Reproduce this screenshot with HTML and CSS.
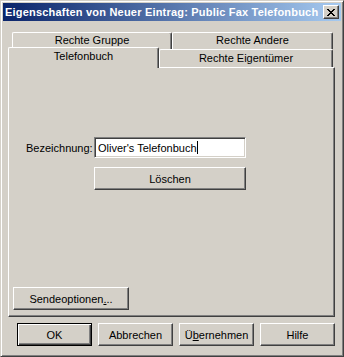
FILE: index.html
```html
<!DOCTYPE html>
<html lang="de">
<head>
    <meta charset="UTF-8">
    <meta name="viewport" content="width=device-width, initial-scale=1.0">
    <title>Eigenschaften von Neuer Eintrag</title>
    <link rel="stylesheet" href="styles.css">
</head>
<body>

    <div class="window">
        <div class="titlebar">
            <span class="title">Eigenschaften von Neuer Eintrag: Public Fax Telefonbuch</span>
            <span class="close">
                <svg width="8" height="7" viewBox="0 0 8 7">
                    <path d="M0 0h2v1h1v1h2v-1h1v-1h2v1h-1v1h-1v1h-1v1h1v1h1v1h1v1h-2v-1h-1v-1h-2v1h-1v1h-2v-1h1v-1h1v-1h1v-1h-1v-1h-1v-1h-1z" fill="#000"/>
                </svg>
            </span>
        </div>

        <div class="tabs">
            <div class="tab-row back">
                <div class="tab first">Rechte Gruppe</div>
                <div class="tab second">Rechte Andere</div>
            </div>
            <div class="tab-row front">
                <div class="tab active">Telefonbuch</div>
                <div class="tab owner">Rechte Eigentümer</div>
            </div>
            <div class="panel">
                <div class="form">
                    <label class="field-label">Bezeichnung:</label>
                    <div class="edit">Oliver's Telefonbuch<span class="caret"></span></div>
                    <span></span>
                    <button class="btn wide">Löschen</button>
                </div>
                <button class="btn send">Sendeoptionen<u>.</u>..</button>
            </div>
        </div>

        <div class="buttons">
            <button class="btn default">OK</button>
            <button class="btn">Abbrechen</button>
            <button class="btn">Ü<u>b</u>ernehmen</button>
            <button class="btn">Hilfe</button>
        </div>
    </div>

</body>
</html>
```

FILE: styles.css
```css
body {
    margin: 0;
    font-family: "Liberation Sans", Arial, sans-serif;
    font-size: 11px;
    color: #000;
}
.window {
    box-sizing: border-box;
    width: 344px;
    height: 357px;
    padding: 2px;
    background: #d4d0c8;
    border: 1px solid;
    border-color: #d4d0c8 #404040 #404040 #d4d0c8;
    box-shadow: inset 1px 1px #fff, inset -1px -1px #808080;
}
.titlebar {
    height: 18px;
    display: flex;
    align-items: center;
    justify-content: space-between;
    padding: 0 2px;
    background: linear-gradient(to right, #0a246a, #a6caf0);
}
.title {
    color: #fff;
    font-weight: bold;
    letter-spacing: 0.2px;
    white-space: nowrap;
}
.close {
    box-sizing: border-box;
    width: 16px;
    height: 14px;
    display: flex;
    align-items: center;
    justify-content: center;
    background: #d4d0c8;
    border: 1px solid;
    border-color: #fff #404040 #404040 #fff;
    box-shadow: inset -1px -1px #808080;
}
.tabs {
    margin: 11px 6px 0 5px;
}
.tab-row {
    display: flex;
    align-items: flex-start;
}
.tab-row.back {
    height: 17px;
    padding-left: 4px;
}
.tab-row.front {
    height: 18px;
}
.tab {
    box-sizing: border-box;
    height: 100%;
    border-top: 1px solid #fff;
    border-left: 1px solid #fff;
    border-right: 1px solid #404040;
    border-radius: 2px 2px 0 0;
    box-shadow: inset -1px 0 #808080;
    text-align: center;
    line-height: 15px;
    white-space: nowrap;
}
.tab.first {
    width: 160px;
}
.tab.second {
    width: 161px;
}
.tab.active {
    position: relative;
    z-index: 1;
    width: 151px;
    height: 21px;
    margin-top: -2px;
    background: #d4d0c8;
    line-height: 17px;
}
.tab.owner {
    width: 174px;
    line-height: 16px;
}
.panel {
    box-sizing: border-box;
    height: 250px;
    display: flex;
    flex-direction: column;
    align-items: flex-start;
    padding: 69px 0 6px 4px;
    border: 1px solid;
    border-color: #fff #404040 #404040 #fff;
    box-shadow: inset -1px -1px #808080;
}
.form {
    display: grid;
    grid-template-columns: 68px 152px;
    row-gap: 9px;
    align-items: center;
    margin-left: 13px;
}
.edit {
    box-sizing: border-box;
    height: 21px;
    padding: 0 3px;
    display: flex;
    align-items: center;
    background: #fff;
    border: 1px solid;
    border-color: #808080 #fff #fff #808080;
    box-shadow: inset 1px 1px #404040, inset -1px -1px #d4d0c8;
    white-space: nowrap;
}
.caret {
    display: inline-block;
    width: 1px;
    height: 13px;
    background: #000;
}
.btn {
    box-sizing: border-box;
    height: 23px;
    padding: 0;
    font-family: inherit;
    font-size: 11px;
    color: #000;
    background: #d4d0c8;
    border: 1px solid;
    border-color: #fff #404040 #404040 #fff;
    box-shadow: inset -1px -1px #808080;
}
.btn u {
    text-underline-offset: 1px;
}
.btn.wide {
    width: 152px;
}
.btn.send {
    width: 116px;
    margin-top: auto;
}
.buttons {
    display: flex;
    gap: 6px;
    margin: 6px 0 0 14px;
}
.buttons .btn {
    width: 75px;
}
.btn.default {
    border: 1px solid #000;
    box-shadow: inset 1px 1px #fff, inset -1px -1px #404040, inset -2px -2px #808080;
}
```
